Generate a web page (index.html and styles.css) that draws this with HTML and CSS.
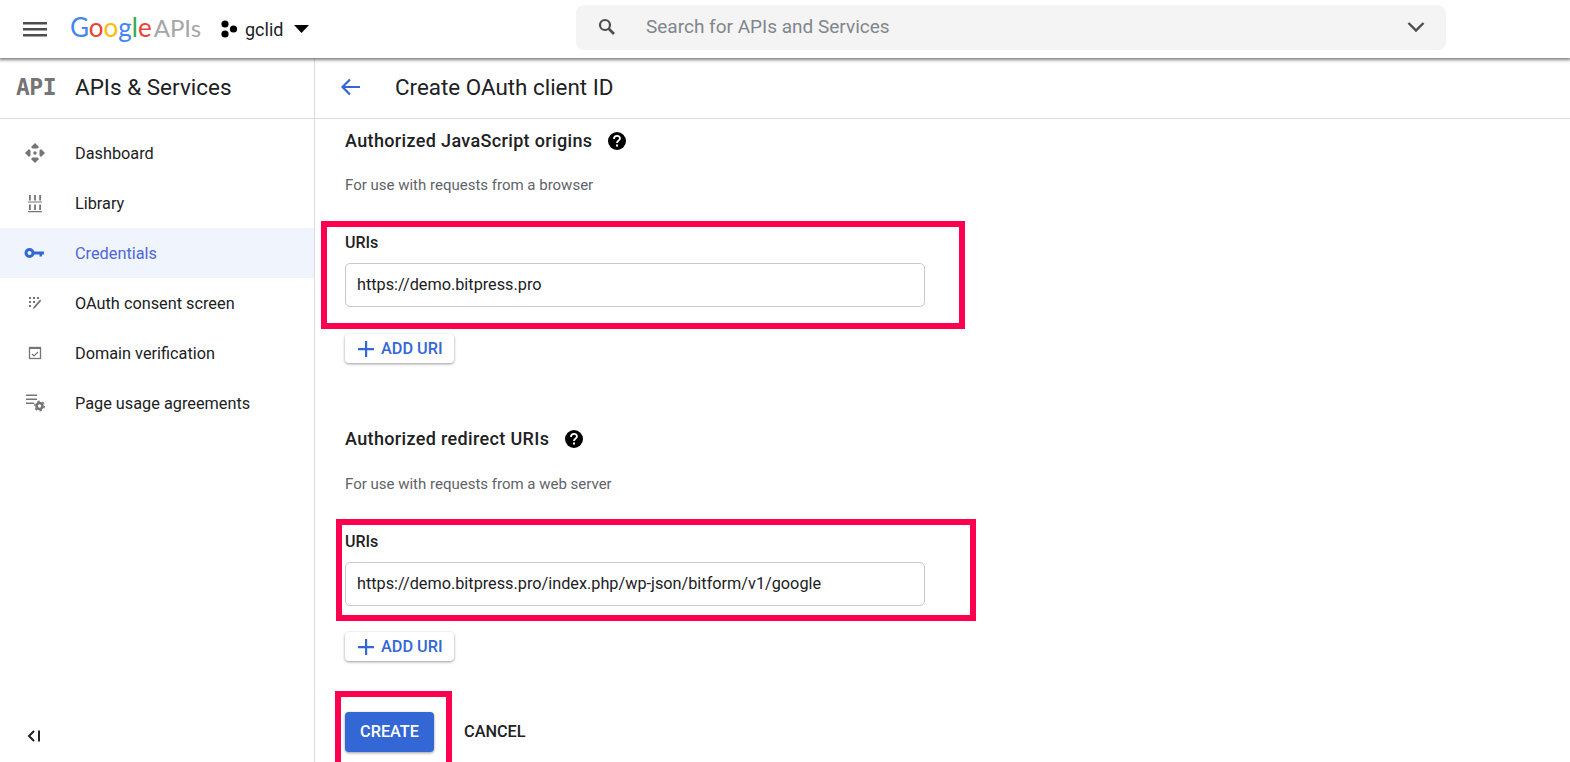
FILE: index.html
```html
<!DOCTYPE html>
<html lang="en">
<head>
    <meta charset="UTF-8">
    <meta name="viewport" content="width=device-width, initial-scale=1.0">
    <title>Create OAuth client ID</title>
    <link rel="stylesheet" href="styles.css">
</head>
<body>
    <header class="topbar">
        <svg class="menu-icon" width="24" height="24" viewBox="0 0 24 24"><path d="M0 5h24v2.400H0zM0 11h24v2.400H0zM0 17h24v2.400H0z" fill="#4d4d4d"/></svg>
        <div class="logo"><span class="g-blue">G</span><span class="g-red">o</span><span class="g-yellow">o</span><span class="g-blue">g</span><span class="g-green">l</span><span class="g-red">e</span><span class="logo-apis">APIs</span></div>
        <div class="project">
            <svg width="18" height="18" viewBox="0 0 18 18"><circle cx="5" cy="4" r="3.600"/><circle cx="13.500" cy="9" r="3.600"/><circle cx="5" cy="14" r="3.600"/></svg>
            <span class="project-name">gclid</span>
            <svg width="15" height="8" viewBox="0 0 15 8"><path d="M0 0h15L7.500 8z"/></svg>
        </div>
        <div class="search">
            <svg class="search-icon" width="20" height="20" viewBox="0 0 20 20"><circle cx="8" cy="8" r="5" fill="none" stroke="#4d4d4d" stroke-width="2.200"/><path d="M11.500 11.500L17 17" stroke="#4d4d4d" stroke-width="2.600"/></svg>
            <span class="search-text">Search for APIs and Services</span>
            <svg class="search-arrow" width="18" height="12" viewBox="0 0 18 12"><path d="M1.500 2L9 9.500 16.500 2" fill="none" stroke="#4d4d4d" stroke-width="2.400"/></svg>
        </div>
    </header>

    <div class="page">
        <aside class="sidebar">
            <div class="sidebar-head">
                <span class="api-badge">API</span>
                <span class="sidebar-title">APIs &amp; Services</span>
            </div>
            <nav class="nav">
                <a class="nav-item">
                    <svg width="24" height="24" viewBox="0 0 24 24" fill="#757575"><path d="M12 2l4 4-1.500 1.500h-5L8 6zM12 22l-4-4 1.500-1.500h5L16 18zM2 12l4-4 1.500 1.500v5L6 16zM22 12l-4 4-1.500-1.500v-5L18 8z"/><circle cx="12" cy="12" r="1.700"/></svg>
                    Dashboard
                </a>
                <a class="nav-item">
                    <svg width="24" height="24" viewBox="0 0 24 24" fill="#757575"><path d="M6 4h1.800v5.500H6zM11.100 4h1.800v5.500h-1.800zM16.200 4H18v5.500h-1.800zM5 10.500h14v1H5zM6 13.500h1.800V19H6zM11.100 13.500h1.800V19h-1.800zM16.200 13.500H18V19h-1.800zM5 20h14v1.200H5z"/></svg>
                    Library
                </a>
                <a class="nav-item active">
                    <svg width="24" height="24" viewBox="0 0 24 24"><circle cx="6.500" cy="12" r="3.500" fill="none" stroke="#3367d6" stroke-width="3"/><path d="M10 10.500h11v3h-2v2h-2.500v-2H10z" fill="#3367d6"/></svg>
                    Credentials
                </a>
                <a class="nav-item">
                    <svg width="24" height="24" viewBox="0 0 24 24" fill="#757575"><path d="M6 6h2v2H6zM10 6h2v2h-2zM14 6h2v2h-2zM6 10h2v2H6zM10 10h2v2h-2zM6 14h2v2H6zM10.500 16l6.500-7.500 1.300 1.200-6.500 7.500-2 .5z"/></svg>
                    OAuth consent screen
                </a>
                <a class="nav-item">
                    <svg width="24" height="24" viewBox="0 0 24 24"><rect x="6.500" y="6.500" width="11" height="11" fill="none" stroke="#757575" stroke-width="1.300"/><path d="M6.500 6.500h11v1.500h-11z" fill="#757575"/><path d="M9 13l2 2 4-4" fill="none" stroke="#757575" stroke-width="1.200"/></svg>
                    Domain verification
                </a>
                <a class="nav-item">
                    <svg width="24" height="24" viewBox="0 0 24 24" fill="#757575"><path d="M3 3.500h11v1.500H3zM3 7.500h11V9H3zM3 11.500h8V13H3z"/><circle cx="16.500" cy="15" r="3" fill="none" stroke="#757575" stroke-width="2.600"/><circle cx="16.500" cy="15" r="4.800" fill="none" stroke="#757575" stroke-width="1.400" stroke-dasharray="2.200 2.800"/></svg>
                    Page usage agreements
                </a>
            </nav>
            <div class="collapse">
                <svg width="14" height="12" viewBox="0 0 14 12"><path d="M7 1L2 6l5 5" fill="none" stroke="#212121" stroke-width="2"/><path d="M11 0.500h2v11h-2z" fill="#212121"/></svg>
            </div>
        </aside>

        <main class="main">
            <div class="title-bar">
                <svg width="24" height="24" viewBox="0 0 24 24"><path d="M22 12H5M12 4.500L4.500 12l7.500 7.500" fill="none" stroke="#3367d6" stroke-width="2.200"/></svg>
                <h1>Create OAuth client ID</h1>
            </div>
            <div class="form">
                <section class="group">
                    <h2>Authorized JavaScript origins
                        <svg class="help" width="18" height="18" viewBox="0 0 18 18"><circle cx="9" cy="9" r="9"/><path d="M6 7c0-4 6-4 6-.5 0 2-3 2-3 4.500" fill="none" stroke="#fff" stroke-width="1.800"/><rect x="8" y="12.500" width="2" height="2" fill="#fff"/></svg>
                    </h2>
                    <p class="hint">For use with requests from a browser</p>
                    <div class="uri-field">
                        <label>URIs</label>
                        <div class="input">https://demo.bitpress.pro</div>
                        <span class="mark mark-origin"></span>
                    </div>
                    <button class="add-btn"><svg width="16" height="16" viewBox="0 0 16 16"><path d="M7 0h2.200v7H16v2.200H9.200V16H7V9.200H0V7h7z" fill="#3367d6"/></svg>ADD URI</button>
                </section>
                <section class="group group-redirect">
                    <h2>Authorized redirect URIs
                        <svg class="help" width="18" height="18" viewBox="0 0 18 18"><circle cx="9" cy="9" r="9"/><path d="M6 7c0-4 6-4 6-.5 0 2-3 2-3 4.500" fill="none" stroke="#fff" stroke-width="1.800"/><rect x="8" y="12.500" width="2" height="2" fill="#fff"/></svg>
                    </h2>
                    <p class="hint">For use with requests from a web server</p>
                    <div class="uri-field">
                        <label>URIs</label>
                        <div class="input">https://demo.bitpress.pro/index.php/wp-json/bitform/v1/google</div>
                        <span class="mark mark-redirect"></span>
                    </div>
                    <button class="add-btn"><svg width="16" height="16" viewBox="0 0 16 16"><path d="M7 0h2.200v7H16v2.200H9.200V16H7V9.200H0V7h7z" fill="#3367d6"/></svg>ADD URI</button>
                </section>
                <div class="actions">
                    <button class="create-btn">CREATE<span class="mark mark-create"></span></button>
                    <button class="cancel-btn">CANCEL</button>
                </div>
            </div>
        </main>
    </div>
</body>
</html>
```

FILE: styles.css
```css
html, body { height: 100%; }
body { margin: 0; height: 762px; overflow: hidden; font-family: Roboto, Arial, sans-serif; color: #202124; background: #fff; display: flex; flex-direction: column; }

.topbar { height: 58px; flex: none; display: flex; align-items: center; position: relative; z-index: 2; background: #fff; box-shadow: 0 1px 3px 1px rgba(0,0,0,.5); }
.menu-icon { margin-left: 23px; }
.logo { margin-left: 23px; width: 151px; font-family: Lato, sans-serif; font-size: 26px; margin-top: -5px; white-space: nowrap; }
.g-blue { color: #4285f4; }
.g-red { color: #ea4335; }
.g-yellow { color: #fbbc05; }
.g-green { color: #34a853; }
.logo-apis { color: #a6a6a6; margin-left: 2px; font-size: 24px; }
.project { display: flex; align-items: center; margin-left: -1px; width: 356px; }
.project-name { font-size: 18px; margin: 0 11px 0 7px; }
.search { width: 870px; height: 45px; margin-top: -4px; background: #f4f4f4; border-radius: 8px; display: flex; align-items: center; box-sizing: border-box; padding: 0 21px; }
.search-icon { margin-right: 29px; }
.search-text { flex: 1; padding-bottom: 2px; font-size: 19px; color: #80868b; }

.page { flex: 1; display: flex; min-height: 0; }
.sidebar { width: 314px; flex: none; border-right: 1px solid #dadce0; box-sizing: content-box; display: flex; flex-direction: column; position: relative; }
.sidebar-head { height: 61px; flex: none; box-sizing: border-box; border-bottom: 1px solid #dadce0; display: flex; align-items: center; padding: 0 0 2px 16px; }
.api-badge { width: 59px; font-family: "DejaVu Sans Mono", monospace; font-weight: bold; font-size: 23px; letter-spacing: -.5px; color: #757575; }
.sidebar-title { font-size: 22.500px; }
.nav { padding-top: 9px; }
.nav-item { height: 50px; display: flex; align-items: center; font-size: 16.300px; color: #202124; padding-left: 23px; }
.nav-item svg { margin-right: 28px; }
.nav-item.active { background: #f0f4fd; color: #4d68d8; }
.collapse { position: absolute; left: 27px; bottom: 20px; line-height: 0; }

.main { flex: 1; min-width: 0; }
.title-bar { height: 61px; box-sizing: border-box; border-bottom: 1px solid #dadce0; display: flex; align-items: center; padding: 0 0 2px 23px; }
.title-bar h1 { margin: 0 0 0 33px; font-size: 22.400px; font-weight: 400; }
.form { padding-left: 30px; }
.group-redirect { margin-top: 54px; }
.group-redirect .hint { margin-top: 24px; }
.group-redirect .add-btn { margin-top: 26px; }
h2 { margin: 0; padding-top: 10px; height: 23px; display: flex; align-items: center; font-size: 18px; letter-spacing: .35px; font-weight: 500; color: #202124; line-height: 23px; }
.help { margin-left: 16px; }
.hint { margin: 23px 0 0; font-size: 15px; line-height: 20px; color: #5f6368; }
.uri-field { position: relative; margin-top: 38px; }
.uri-field label { display: block; font-size: 16px; font-weight: 500; line-height: 20px; }
.input { margin-top: 10px; width: 580px; height: 44px; box-sizing: border-box; border: 1px solid #c8c8c8; border-radius: 5px; padding-left: 11px; line-height: 41px; font-size: 16.250px; color: #202124; }
.add-btn { margin-top: 27px; height: 29px; padding: 0 11px 0 13px; display: flex; align-items: center; gap: 7px; border: 0; border-radius: 4px; background: #fff; box-shadow: 0 1px 3px rgba(0,0,0,.4); color: #3367d6; font-family: inherit; font-size: 16.300px; font-weight: 500; }
.actions { margin-top: 51px; display: flex; align-items: center; gap: 30px; }
.create-btn { position: relative; width: 89px; height: 40px; padding: 0 0 2px; border: 0; border-radius: 4px; background: #3367d6; color: #fff; font-family: inherit; font-size: 16.300px; font-weight: 500; box-shadow: 0 1px 3px rgba(0,0,0,.4); }
.cancel-btn { border: 0; background: none; padding: 0 0 2px; font-family: inherit; font-size: 16.300px; font-weight: 500; color: #202124; }

/* red annotation boxes drawn over the form */
.mark { position: absolute; box-sizing: border-box; border: 6px solid #ff0050; pointer-events: none; }
.mark-origin { left: -24px; top: -12px; width: 644px; height: 108px; }
.mark-redirect { left: -9px; top: -13px; width: 640px; height: 102px; }
.mark-create { left: -10px; top: -21px; width: 117px; height: 80px; }
```
